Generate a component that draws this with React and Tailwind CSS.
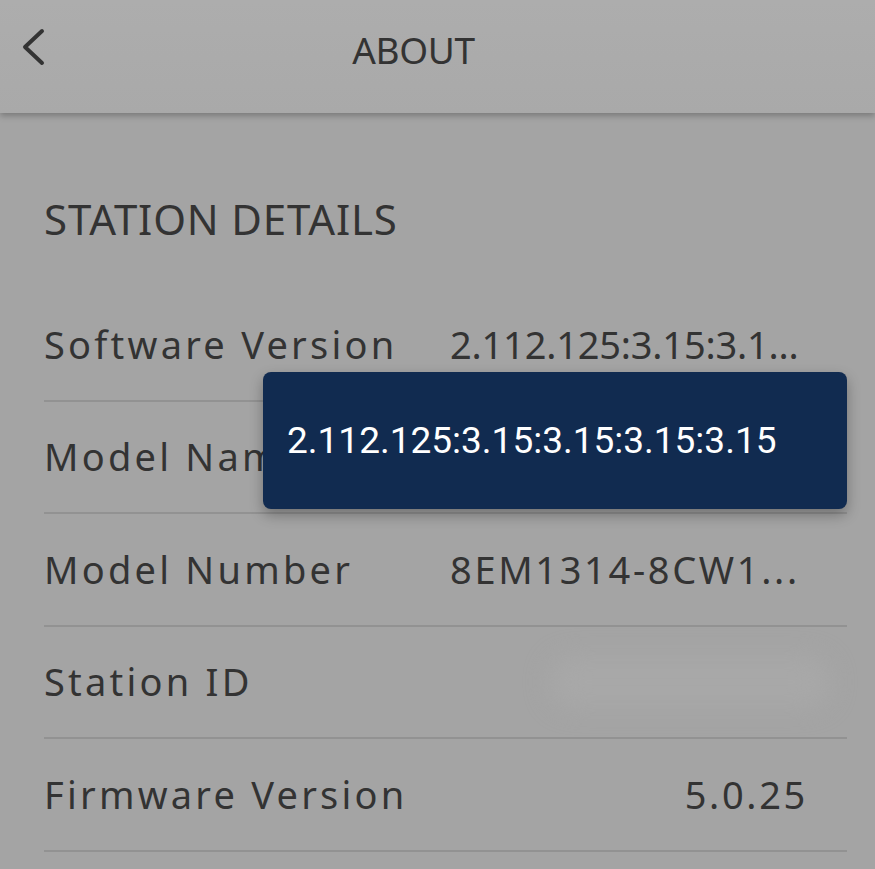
const rows = [
  { label: 'Software Version', value: '2.112.125:3.15:3.1...', tight: true },
  { label: 'Model Name', value: '' },
  { label: 'Model Number', value: '8EM1314-8CW1...' },
  { label: 'Station ID', value: null },
  { label: 'Firmware Version', value: '5.0.25', right: true },
];

function Row({ label, value, right, tight }) {
  return (
    <div className="flex h-[112.5px] items-center border-b-2 border-[#929292]">
      <div className="w-[406px] shrink-0 text-[38px] tracking-[0.085em] text-[#333]">{label}</div>
      {value === null ? (
        <div className="ml-[100px] h-[50px] w-[280px] rounded-full bg-[#a8a8a8] blur-md" />
      ) : (
        <div
          className={`w-[358px] whitespace-nowrap text-[38px] text-[#333] ${tight ? 'tracking-[-0.005em]' : 'tracking-[0.07em]'} ${right ? 'text-right' : ''}`}
        >
          {value}
        </div>
      )}
    </div>
  );
}

export default function App() {
  return (
    <div className="relative h-[869px] w-[875px] overflow-hidden bg-[#a4a4a4] font-['Noto_Sans',sans-serif]">
      <header className="relative z-10 flex h-[113px] items-center bg-gradient-to-b from-[#adadad] to-[#a9a9a9] shadow-[0_3px_6px_rgba(0,0,0,0.25)]">
        <svg className="absolute left-0 top-0" width="60" height="80" viewBox="0 0 60 80" fill="none">
          <path d="M42 31 L25 47 L42 63" stroke="#333" strokeWidth="4" strokeLinecap="round" strokeLinejoin="round" />
        </svg>
        <h1 className="w-full pr-[48px] pb-[14px] text-center text-[37px] tracking-[-0.01em] text-[#333]">ABOUT</h1>
      </header>
      <main className="px-[44px] pr-[28px]">
        <h2 className="pt-[85px] pb-[49px] text-[42px] leading-none tracking-[0.02em] text-[#333]">STATION DETAILS</h2>
        <div>
          {rows.map((r) => (
            <Row key={r.label} {...r} />
          ))}
        </div>
      </main>
      <div className="absolute left-[263px] top-[372px] flex h-[137px] w-[584px] items-center rounded-[8px] bg-[#112b50] pl-[24px] font-['Roboto',sans-serif] text-[37px] text-white shadow-[0_6px_14px_rgba(0,0,0,0.3)]">
        2.112.125:3.15:3.15:3.15:3.15
      </div>
    </div>
  );
}
